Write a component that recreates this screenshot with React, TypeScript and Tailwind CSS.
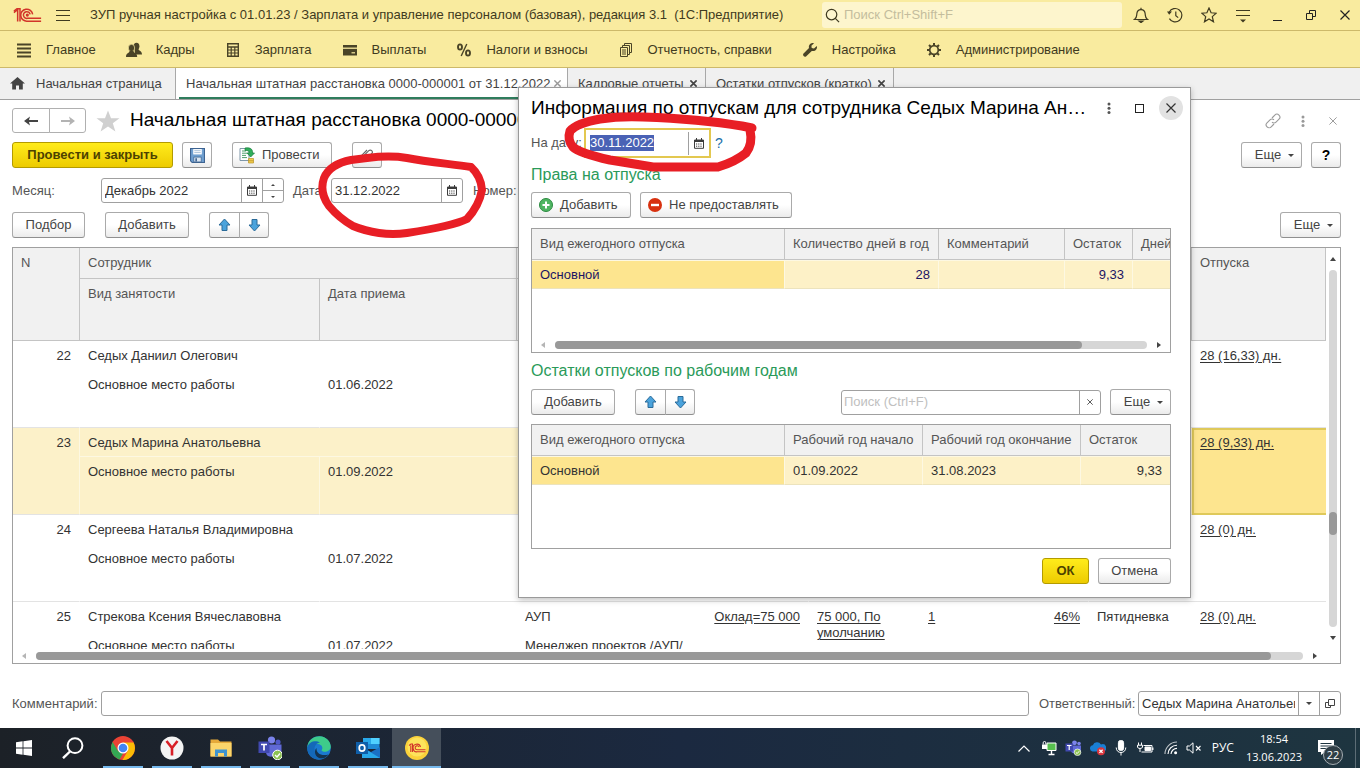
import { useEffect, useRef, type ReactNode } from 'react'

interface Employee {
  n: number
  name: string
  date: string
  vacation: string
  selected?: boolean
  unit?: string
  position?: string
  salary?: string
  tariff?: string
  rate?: string
  percent?: string
  schedule?: string
}

const EMPLOYEES: Employee[] = [
  { n: 22, name: 'Седых Даниил Олегович', date: '01.06.2022', vacation: '28 (16,33) дн.' },
  { n: 23, name: 'Седых Марина Анатольевна', date: '01.09.2022', vacation: '28 (9,33) дн.', selected: true },
  { n: 24, name: 'Сергеева Наталья Владимировна', date: '01.07.2022', vacation: '28 (0) дн.' },
  {
    n: 25,
    name: 'Стрекова Ксения Вячеславовна',
    date: '01.07.2022',
    vacation: '28 (0) дн.',
    unit: 'АУП',
    position: 'Менеджер проектов /АУП/',
    salary: 'Оклад=75 000',
    tariff: '75 000, По умолчанию',
    rate: '1',
    percent: '46%',
    schedule: 'Пятидневка',
  },
]

const BTN_BASE = 'flex h-[26px] shrink-0 items-center whitespace-nowrap rounded-[3px] border'
const BTN_GREY = `${BTN_BASE} border-[#aaaaaa] border-b-[#8f8f8f] bg-linear-to-b from-white from-50% to-[#ebebeb] text-[#444444]`
const BTN = `${BTN_GREY} justify-center`
const BTN_YELLOW = `${BTN_BASE} justify-center border-[#b39b00] bg-linear-to-b from-[#ffec1a] to-[#edcb00] font-bold text-[#4d4200]`
const FIELD = 'flex h-[25px] items-stretch rounded-[3px] border border-[#a0a0a0] bg-white'

/* ---------- иконки ---------- */

function OneCLogo({ className, color = '#d2342a' }: { className?: string; color?: string }) {
  return (
    <svg viewBox="0 0 30 16" className={className} fill="none" stroke={color} strokeWidth="1.6">
      <path d="M0.5 5 L4.5 1.5 V14.5" />
      <path d="M0.5 3.4 L3.8 0.8 H7 V14.5" />
      <path d="M20.5 6.8 A6.4 6.4 0 1 0 15 14 H29.5" />
      <path d="M17.8 6.8 A3.6 3.6 0 1 0 15 11 H29.5" />
      <circle cx="14.8" cy="7.5" r="0.9" />
    </svg>
  )
}

function CalendarIcon() {
  return (
    <svg viewBox="0 0 10 11" className="h-[11px] w-[10px]" fill="none" stroke="#3c3c3c">
      <path d="M0.5 2 H9.5 V10.3 H0.5 Z" />
      <path d="M0.5 3 H9.5" strokeWidth="2" />
      <path d="M2.5 0 V2 M7.5 0 V2" />
      <path d="M2 6 H8.5 M2 8.2 H8.5" strokeDasharray="1.2 1" />
    </svg>
  )
}

function ArrowUp() {
  return (
    <svg viewBox="0 0 13 14" className="h-[14px] w-[13px]">
      <path d="M6.5 1 L12 7 H9 V12.5 H4 V7 H1 Z" fill="#4ba3dc" stroke="#2b6b99" strokeLinejoin="round" />
    </svg>
  )
}

function ArrowDown() {
  return (
    <svg viewBox="0 0 13 14" className="h-[14px] w-[13px]">
      <path d="M6.5 13 L12 7 H9 V1.5 H4 V7 H1 Z" fill="#4ba3dc" stroke="#2b6b99" strokeLinejoin="round" />
    </svg>
  )
}

function Caret({ className = 'h-[3px] w-[6px]' }: { className?: string }) {
  return (
    <svg viewBox="0 0 6 4" preserveAspectRatio="none" className={className}>
      <path d="M0 0 H6 L3 4 Z" fill="#444444" />
    </svg>
  )
}

function Cross({ className, color, width = 1.2 }: { className: string; color: string; width?: number }) {
  return (
    <svg viewBox="0 0 10 10" className={className} stroke={color} strokeWidth={width}>
      <path d="M0.5 0.5 L9.5 9.5 M9.5 0.5 L0.5 9.5" />
    </svg>
  )
}

function Dots({ color }: { color: string }) {
  return (
    <svg viewBox="0 0 4 14" className="h-[14px] w-[4px]" fill={color}>
      <circle cx="2" cy="3" r="1.5" />
      <circle cx="2" cy="7.2" r="1.5" />
      <circle cx="2" cy="11.4" r="1.5" />
    </svg>
  )
}

function Magnifier({ className, color, width }: { className: string; color: string; width: number }) {
  return (
    <svg viewBox="0 0 16 16" className={className} fill="none" stroke={color} strokeWidth={width}>
      <circle cx="7" cy="7" r="5.6" />
      <path d="M11 11 L15 15" />
    </svg>
  )
}

const MENU: { label: string; icon: ReactNode }[] = [
  {
    label: 'Главное',
    icon: <path d="M1 2.5 H15 M1 6.5 H15 M1 10.5 H15 M1 14.5 H15" stroke="#4a4427" strokeWidth="1.8" />,
  },
  {
    label: 'Кадры',
    icon: (
      <g fill="#4a4427">
        <ellipse cx="10.5" cy="4.2" rx="2.9" ry="3.5" />
        <path d="M8.5 7 H12.5 C12.5 9 16 8.6 16 12.5 H9 Z" />
        <ellipse cx="5.5" cy="6" rx="3.2" ry="3.7" stroke="#f9eb9f" strokeWidth="0.7" />
        <path d="M0 15 C0 10.8 3.5 11.5 3.7 8.8 H7.4 C7.5 11.5 11.2 10.8 11.2 15 Z" />
      </g>
    ),
  },
  {
    label: 'Зарплата',
    icon: (
      <g fill="none" stroke="#4a4427" strokeWidth="1.4">
        <path d="M2.7 1.7 H13.3 V14.3 H2.7 Z M2.7 5 H13.3" />
        <path d="M2.7 8 H13.3 M2.7 11 H13.3 M6.2 5 V14 M9.8 5 V14" strokeWidth="1.2" />
      </g>
    ),
  },
  {
    label: 'Выплаты',
    icon: (
      <g>
        <path d="M1 3 H15 V13.5 H1 Z" fill="#4a4427" />
        <path d="M1 6.2 H15" stroke="#f9eb9f" strokeWidth="1.3" />
        <path d="M9.5 10.8 H13" stroke="#f9eb9f" strokeWidth="1.2" />
      </g>
    ),
  },
  {
    label: 'Налоги и взносы',
    icon: (
      <g fill="none" stroke="#4a4427" strokeWidth="1.9">
        <ellipse cx="4" cy="5" rx="2" ry="2.6" />
        <ellipse cx="12" cy="11" rx="2" ry="2.6" />
        <path d="M10.8 2 L5.2 14" strokeWidth="1.4" />
      </g>
    ),
  },
  {
    label: 'Отчетность, справки',
    icon: (
      <g fill="none" stroke="#4a4427">
        <path d="M2.5 5.5 H9.5 V14.5 H2.5 Z M4.5 5.5 V3.5 H11.5 V12.5 H9.5 M6.5 3.5 V1.5 H13.5 V10.5 H11.5" />
        <path d="M4 8 H8 M4 10 H8 M4 12 H8" />
      </g>
    ),
  },
  {
    label: 'Настройка',
    icon: (
      <path
        d="M14.8 4 L12 6.4 L9.7 5.9 L9.4 3.7 L12 1.2 C9 0.4 6.2 2.8 7 6 L1.3 11.8 C0.3 13.2 2.4 15.6 4 14.6 L9.8 8.9 C13 9.8 15.8 7 14.8 4 Z"
        fill="#4a4427"
      />
    ),
  },
  {
    label: 'Администрирование',
    icon: (
      <g fill="none" stroke="#4a4427">
        <circle cx="8" cy="8" r="4.3" strokeWidth="1.7" />
        <path
          d="M8 1 V3.5 M8 12.5 V15 M1 8 H3.5 M12.5 8 H15 M3 3 L4.8 4.8 M11.2 11.2 L13 13 M13 3 L11.2 4.8 M4.8 11.2 L3 13"
          strokeWidth="2"
        />
      </g>
    ),
  },
]

/* ---------- шапка окна ---------- */

function TitleBar() {
  const btn = 'flex h-full w-[34px] items-center justify-center'
  return (
    <header className="flex h-[31px] shrink-0 items-center border-b border-[#cdb96a] bg-[#f9eb9f] text-[#3f3a20]">
      <OneCLogo className="ml-[13px] h-[15px] w-[29px]" />
      <button aria-label="Меню" className="ml-[14px] flex h-[11px] w-[14px] flex-col justify-between">
        <span className="h-px w-full bg-[#3f3a20]" />
        <span className="h-px w-full bg-[#3f3a20]" />
        <span className="h-px w-full bg-[#3f3a20]" />
      </button>
      <h1 className="ml-5 min-w-0 flex-1 truncate whitespace-pre">
        ЗУП ручная настройка с 01.01.23 / Зарплата и управление персоналом (базовая), редакция 3.1  (1С:Предприятие)
      </h1>
      <label className="flex h-[26px] w-[300px] items-center gap-1 rounded-[3px] bg-[#fdf5cd] pl-[3px]">
        <Magnifier className="h-[15px] w-[15px]" color="#3f3a20" width={1.3} />
        <input
          aria-label="Поиск"
          placeholder="Поиск Ctrl+Shift+F"
          className="min-w-0 flex-1 bg-transparent outline-none placeholder:text-[#c4bd9d]"
        />
      </label>
      <div className="-mr-[2px] ml-[2px] flex h-full">
        <button aria-label="Уведомления" className={btn}>
          <svg viewBox="0 0 16 16" className="h-4 w-4" fill="none" stroke="#3f3a20" strokeWidth="1.2">
            <path d="M1.5 12.5 C3.8 11 3.6 9.5 3.8 7 C4 4.3 5.5 2.6 8 2.6 C10.5 2.6 12 4.3 12.2 7 C12.4 9.5 12.2 11 14.5 12.5 Z" />
            <path d="M8 0.8 V2.6" />
            <path d="M6 14 H10 L8 15.6 Z" fill="#3f3a20" />
          </svg>
        </button>
        <button aria-label="История" className={btn}>
          <svg viewBox="0 0 16 16" className="h-4 w-4" fill="none" stroke="#3f3a20" strokeWidth="1.2">
            <path d="M2.2 5.2 A6.7 6.7 0 1 1 2.4 11.6" />
            <path d="M8.8 4.5 V8.6 L11.2 10.6" />
            <path d="M0 4.5 L5 4.5 L2.2 7.8 Z" fill="#3f3a20" stroke="none" />
          </svg>
        </button>
        <button aria-label="Избранное" className={btn}>
          <svg viewBox="0 0 16 16" className="h-4 w-4" fill="none" stroke="#3f3a20" strokeWidth="1.2">
            <path d="M8 1 L10.1 5.8 L15.2 6.2 L11.3 9.6 L12.5 14.8 L8 12 L3.5 14.8 L4.7 9.6 L0.8 6.2 L5.9 5.8 Z" />
          </svg>
        </button>
        <button aria-label="Настройки" className={btn}>
          <svg viewBox="0 0 16 16" className="h-4 w-4" stroke="#3f3a20" strokeWidth="1.2">
            <path d="M1 3.5 H15 M1 8.5 H15" />
            <path d="M5 12.5 H11 L8 15.5 Z" fill="#3f3a20" stroke="none" />
          </svg>
        </button>
        <button aria-label="Свернуть" className={btn}>
          <span className="mt-[10px] h-px w-[9px] bg-[#222222]" />
        </button>
        <button aria-label="Развернуть" className={btn}>
          <svg viewBox="0 0 10 10" className="h-[10px] w-[10px]" fill="none" stroke="#222222">
            <path d="M0.5 3.5 H6.5 V9.5 H0.5 Z M3.5 3.5 V0.5 H9.5 V6.5 H6.5" />
          </svg>
        </button>
        <button aria-label="Закрыть" className={btn}>
          <Cross className="h-[10px] w-[10px]" color="#222222" />
        </button>
      </div>
    </header>
  )
}

function MenuBar() {
  return (
    <nav className="flex h-[37px] shrink-0 items-center gap-[30px] border-b border-[#cdb96a] bg-[#f9eb9f] pt-px pl-4 text-[#3f3a20]">
      {MENU.map(({ label, icon }) => (
        <a key={label} href="#" className="flex items-center gap-[14px] whitespace-nowrap">
          <svg viewBox="0 0 16 16" className="h-4 w-4">
            {icon}
          </svg>
          {label}
        </a>
      ))}
    </nav>
  )
}

function Tabs() {
  const tab = 'flex items-center whitespace-nowrap border-r border-[#a8a8a8] pl-[10px]'
  return (
    <div className="flex h-8 shrink-0 items-stretch border-b border-[#a0a0a0] bg-[#f0f0f0] text-[#444444]">
      <button className="flex w-[176px] items-center gap-[11px] border-r border-[#a8a8a8] pl-[10px]">
        <svg viewBox="0 0 15 13" className="h-[13px] w-[15px]" fill="#444444">
          <path d="M7.5 0 L15 6.5 H12.8 V12.5 H9 V8.5 H6 V12.5 H2.2 V6.5 H0 Z" />
        </svg>
        Начальная страница
      </button>
      <div className="flex w-[392px] items-stretch border-r border-[#a8a8a8] bg-white px-[3px]">
        <button className="flex flex-1 items-center justify-between whitespace-nowrap border-b-2 border-[#2f7d5d] pt-[2px] pr-[3px] pl-[7px]">
          Начальная штатная расстановка 0000-000001 от 31.12.2022
          <Cross className="h-[7px] w-[7px]" color="#999999" width={2} />
        </button>
      </div>
      <button className={`${tab} w-[138px] justify-between pr-2`}>
        Кадровые отчеты
        <Cross className="h-[7px] w-[7px]" color="#444444" width={2.4} />
      </button>
      <button className={`${tab} w-[188px] justify-between pr-2`}>
        Остатки отпусков (кратко)
        <Cross className="h-[7px] w-[7px]" color="#444444" width={2.4} />
      </button>
    </div>
  )
}

/* ---------- общие элементы формы ---------- */

function MoreButton() {
  return (
    <button className={`${BTN} w-[61px] gap-[7px] pl-[6px]`}>
      Еще
      <Caret />
    </button>
  )
}

function MoveButtons() {
  return (
    <div className="flex">
      <button aria-label="Вверх" className={`${BTN} w-[31px] rounded-r-none`}>
        <ArrowUp />
      </button>
      <button aria-label="Вниз" className={`${BTN} -ml-px w-[30px] rounded-l-none`}>
        <ArrowDown />
      </button>
    </div>
  )
}

function HScroll({ thumb }: { thumb: string }) {
  return (
    <div className="flex h-[14px] shrink-0 items-center gap-[10px] px-[9px]">
      <svg viewBox="0 0 4 6" className="h-[6px] w-[4px]">
        <path d="M4 0 V6 L0 3 Z" fill="#b5b5b5" />
      </svg>
      <div className="h-2 flex-1 rounded-full bg-[#d6d6d6]">
        <div className="h-2 rounded-full bg-[#999999]" style={{ width: thumb }} />
      </div>
      <svg viewBox="0 0 4 6" className="h-[6px] w-[4px]">
        <path d="M0 0 V6 L4 3 Z" fill="#444444" />
      </svg>
    </div>
  )
}

/* ---------- форма документа ---------- */

function FormHeader() {
  return (
    <>
      <div className="flex h-[25px] items-center">
        <div className="flex">
          <button aria-label="Назад" className="flex h-[25px] w-[38px] items-center justify-center rounded-l-[3px] border border-[#b0b0b0] bg-white">
            <svg viewBox="0 0 14 10" className="h-[10px] w-[14px]" fill="#444444">
              <path d="M0 5 L6 0.5 L5 4 H14 V6 H5 L6 9.5 Z" />
            </svg>
          </button>
          <button aria-label="Вперед" className="-ml-px flex h-[25px] w-[37px] items-center justify-center rounded-r-[3px] border border-[#b0b0b0] bg-white">
            <svg viewBox="0 0 14 10" className="h-[10px] w-[14px]" fill="#b3b3b3">
              <path d="M14 5 L8 0.5 L9 4 H0 V6 H9 L8 9.5 Z" />
            </svg>
          </button>
        </div>
        <button aria-label="В избранное" className="ml-[10px]">
          <svg viewBox="0 0 24 22" className="h-[22px] w-6" fill="#d0d0d0">
            <path d="M12 0.5 L15 8.3 H23.5 L16.8 13.2 L19.4 21.5 L12 16.5 L4.6 21.5 L7.2 13.2 L0.5 8.3 H9 Z" />
          </svg>
        </button>
        <h2 className="ml-[10px] min-w-0 flex-1 truncate text-[19px] text-black">
          Начальная штатная расстановка 0000-000001
        </h2>
        <button aria-label="Ссылка" className="flex w-[30px] justify-center">
          <svg viewBox="0 0 16 16" className="h-4 w-4" fill="none" stroke="#999999" strokeWidth="1.1">
            <path d="M7 5 L9.8 2.1 A2.8 2.8 0 0 1 14 6.2 L11 9.2 A2.8 2.8 0 0 1 7 9.2" />
            <path d="M9 11 L6.2 13.9 A2.8 2.8 0 0 1 2 9.8 L5 6.8 A2.8 2.8 0 0 1 9 6.8" />
          </svg>
        </button>
        <button aria-label="Еще действия" className="flex w-[30px] justify-center">
          <Dots color="#999999" />
        </button>
        <button aria-label="Закрыть форму" className="-mr-[7px] flex w-[30px] justify-center">
          <Cross className="h-[8px] w-[8px]" color="#999999" />
        </button>
      </div>

      <div className="mt-[9px] flex items-center">
        <button className={`${BTN_YELLOW} w-[161px]`}>Провести и закрыть</button>
        <button aria-label="Записать" className={`${BTN} ml-[9px] w-[30px]`}>
          <svg viewBox="0 0 14 14" className="h-[15px] w-[15px]">
            <path d="M0.5 0.5 H13.5 V13.5 H2 L0.5 12 Z" fill="#6f9fd0" stroke="#3d6391" />
            <path d="M3 1 H11 V6 H3 Z" fill="#ffffff" />
            <path d="M4 2.5 H10 M4 4.3 H10" stroke="#9db8d4" strokeWidth="0.8" />
            <path d="M3.5 8.5 H10.5 V13 H3.5 Z" fill="#dbe6f1" stroke="#3d6391" strokeWidth="0.7" />
            <path d="M5 9.5 H6.5 V12.5 H5 Z" fill="#3d6391" />
          </svg>
        </button>
        <button className={`${BTN_GREY} ml-5 w-[100px] gap-[7px] pl-[6px]`}>
          <svg viewBox="0 0 16 17" className="h-[17px] w-4">
            <path d="M1 1.5 H10 V13.5 H1 Z" fill="#ffffff" stroke="#7f97a8" />
            <path d="M3 4 H7 M3 6.2 H8 M3 8.4 H7 M3 10.6 H8" stroke="#4ea06a" />
            <path d="M6 1 C11 0.2 14 2 13.5 6 H15.5 L11.7 10 L8 6 H10.2 C10.4 4 9 3.2 6 3.5 Z" fill="#2fae5a" stroke="#1b7c3c" strokeWidth="0.7" />
            <path d="M9.5 11.5 H14.5 V16 H9.5 Z" fill="#f2cc4b" stroke="#b8922a" strokeWidth="0.7" />
            <path d="M9.5 13.7 H14.5" stroke="#b8922a" strokeWidth="0.7" />
          </svg>
          Провести
        </button>
        <button aria-label="Файлы" className={`${BTN} ml-5 w-[30px]`}>
          <svg viewBox="0 0 14 14" className="h-[14px] w-[14px]" fill="none" stroke="#666666" strokeWidth="1.1">
            <path d="M3.5 8 L8.8 2.7 A2 2 0 0 1 11.7 5.6 L5.8 11.5 A2.9 2.9 0 0 1 1.7 7.4 L7 2" />
          </svg>
        </button>
        <div className="ml-auto flex gap-[9px]">
          <MoreButton />
          <button className={`${BTN} w-[30px] text-[14px] font-bold text-black`}>?</button>
        </div>
      </div>

      <div className="mt-[10px] flex items-center text-[#555555]">
        <label htmlFor="month" className="w-[89px]">
          Месяц:
        </label>
        <div className={`${FIELD} w-[183px]`}>
          <input id="month" defaultValue="Декабрь 2022" className="min-w-0 flex-1 pl-[3px] text-[#333333] outline-none" />
          <button aria-label="Выбрать месяц" className="flex w-[21px] items-center justify-center border-l border-[#a0a0a0]">
            <CalendarIcon />
          </button>
          <div className="flex w-[21px] flex-col border-l border-[#a0a0a0]">
            <button aria-label="Больше" className="flex flex-1 items-center justify-center border-b border-[#a0a0a0]">
              <svg viewBox="0 0 4 2" className="h-[2px] w-[4px]">
                <path d="M0 2 H4 L2 0 Z" fill="#444444" />
              </svg>
            </button>
            <button aria-label="Меньше" className="flex flex-1 items-center justify-center">
              <Caret className="h-[2px] w-[4px]" />
            </button>
          </div>
        </div>
        <label htmlFor="doc-date" className="ml-[9px] w-[38px]">
          Дата:
        </label>
        <div className={`${FIELD} w-[132px]`}>
          <input id="doc-date" defaultValue="31.12.2022" className="min-w-0 flex-1 pl-[3px] text-[#333333] outline-none" />
          <button aria-label="Выбрать дату" className="flex w-[21px] items-center justify-center border-l border-[#a0a0a0]">
            <CalendarIcon />
          </button>
        </div>
        <label htmlFor="doc-number" className="ml-[10px] w-[50px]">
          Номер:
        </label>
        <input id="doc-number" defaultValue="0000-000001" className="h-[25px] w-[120px] rounded-[3px] border border-[#a0a0a0] pl-[3px]" />
      </div>

      <div className="mt-[9px] flex items-center">
        <button className={`${BTN} w-[73px]`}>Подбор</button>
        <button className={`${BTN} mx-5 w-[84px]`}>Добавить</button>
        <MoveButtons />
        <div className="ml-auto">
          <MoreButton />
        </div>
      </div>
    </>
  )
}

function EmployeeRows({ e }: { e: Employee }) {
  const bg = e.selected ? 'bg-[#fcf1c9]' : ''
  const line = e.selected ? 'border-r border-r-[#fdf8e2]' : 'border-r border-r-transparent'
  const cell = `border-b border-b-[#e3e3e3] px-2 pt-[7px] align-top ${bg}`
  return (
    <>
      <tr className="h-[29px]">
        <td rowSpan={2} className={`${cell} ${line} text-right`}>{e.n}</td>
        <td colSpan={2} className={`px-2 pt-[7px] align-top ${bg} ${e.selected ? 'border-b border-[#fdf8e2]' : ''}`}>{e.name}</td>
        <td className={`px-2 pt-[7px] align-top ${bg}`}>{e.unit}</td>
        <td rowSpan={2} className={`${cell} ${line} text-right underline underline-offset-2`}>{e.salary}</td>
        <td rowSpan={2} className={`${cell} leading-4 underline underline-offset-2`}>{e.tariff}</td>
        <td rowSpan={2} className={`${cell} underline underline-offset-2`}>{e.rate}</td>
        <td rowSpan={2} className={`${cell} ${line} text-right underline underline-offset-2`}>{e.percent}</td>
        <td rowSpan={2} className={cell}>{e.schedule}</td>
        <td
          rowSpan={2}
          className={`align-top underline underline-offset-2 ${
            e.selected
              ? 'border-2 border-r-0 border-[#dfc95a] bg-[#fde58f] pt-[5px] pr-2 pl-[6px]'
              : 'border-b border-[#e3e3e3] px-2 pt-[7px]'
          }`}
        >
          {e.vacation}
        </td>
      </tr>
      <tr className="h-[58px]">
        <td className={`${cell} ${line}`}>Основное место работы</td>
        <td className={cell}>{e.date}</td>
        <td className={cell}>{e.position}</td>
      </tr>
    </>
  )
}

function EmployeeTable() {
  const th = 'border-r border-b border-[#c4c4c4] bg-[#f1f1f1] px-2 pt-[7px] text-left align-top font-normal'
  return (
    <div className="mt-[9px] flex min-h-0 flex-1 flex-col border border-[#a0a0a0]">
      <div className="flex min-h-0 flex-1">
        <div className="min-w-0 flex-1 overflow-hidden">
          <table className="w-full table-fixed border-separate border-spacing-0 leading-4 text-[#333333]">
            <colgroup>
              <col className="w-[67px]" />
              <col className="w-[240px]" />
              <col className="w-[197px]" />
              <col />
              <col className="w-[103px]" />
              <col className="w-[111px]" />
              <col className="w-[84px]" />
              <col className="w-[85px]" />
              <col className="w-[103px]" />
              <col className="w-[134px]" />
            </colgroup>
            <thead className="text-[#555555]">
              <tr className="h-[31px]">
                <th rowSpan={2} className={th}>N</th>
                <th colSpan={2} className={th}>Сотрудник</th>
                <th className={th}>Подразделение</th>
                <th rowSpan={2} className={th}>Начисления</th>
                <th rowSpan={2} className={th}>Аванс</th>
                <th rowSpan={2} className={th}>Ставка</th>
                <th rowSpan={2} className={th}>Процент</th>
                <th rowSpan={2} className={th}>График</th>
                <th rowSpan={2} className={th}>Отпуска</th>
              </tr>
              <tr className="h-[62px]">
                <th className={th}>Вид занятости</th>
                <th className={th}>Дата приема</th>
                <th className={th}>Должность</th>
              </tr>
            </thead>
            <tbody>
              {EMPLOYEES.map((e) => (
                <EmployeeRows key={e.n} e={e} />
              ))}
            </tbody>
          </table>
        </div>
        <div className="flex w-[14px] shrink-0 flex-col items-center pt-[9px] pb-[9px]">
          <svg viewBox="0 0 6 4" className="h-[4px] w-[6px]">
            <path d="M0 4 H6 L3 0 Z" fill="#444444" />
          </svg>
          <div className="my-[9px] flex w-2 flex-1 flex-col rounded-full bg-[#d6d6d6]">
            <div className="mt-auto mb-[92px] h-[23px] rounded-full bg-[#999999]" />
          </div>
          <Caret className="h-[4px] w-[6px]" />
        </div>
      </div>
      <div className="pr-[14px]">
        <HScroll thumb="97.5%" />
      </div>
    </div>
  )
}

function FormFooter() {
  return (
    <div className="mt-[27px] mb-3 flex items-center text-[#555555]">
      <label htmlFor="comment" className="w-[89px]">
        Комментарий:
      </label>
      <input id="comment" className="h-[25px] min-w-0 flex-1 rounded-[3px] border border-[#a0a0a0] px-1" />
      <label htmlFor="responsible" className="ml-[10px] w-[99px]">
        Ответственный:
      </label>
      <div className={`${FIELD} w-[203px]`}>
        <input
          id="responsible"
          defaultValue="Седых Марина Анатольевна"
          className="mr-[3px] min-w-0 flex-1 pl-[3px] text-[#333333] outline-none"
        />
        <button aria-label="Выбрать" className="flex w-[21px] items-center justify-center border-l border-[#a0a0a0]">
          <Caret />
        </button>
        <button aria-label="Открыть" className="flex w-[21px] items-center justify-center border-l border-[#a0a0a0]">
          <svg viewBox="0 0 10 10" className="h-[10px] w-[10px]" fill="none" stroke="#444444">
            <path d="M3.5 0.5 H9.5 V6.5 H3.5 Z M3.5 3.5 H0.5 V8.5 H5.5 V6.5" />
          </svg>
        </button>
      </div>
    </div>
  )
}

/* ---------- окно остатков отпусков ---------- */

function VacationDialog() {
  const dateRef = useRef<HTMLInputElement>(null)

  // дата открывается выделенной, чтобы сразу ввести новую
  useEffect(() => {
    dateRef.current?.focus()
    dateRef.current?.select()
  }, [])

  const th = 'border-r border-b border-[#c4c4c4] bg-[#f1f1f1] px-2 text-left font-normal text-[#555555] last:border-r-0'
  const td = 'border-r border-t border-b border-[#fdf8e2] border-b-[#ece3bd] bg-[#fdf1c7] px-2 last:border-r-0'
  const current = 'border-r border-t border-b border-[#fdf8e2] border-b-[#ece3bd] bg-[#fde58f] px-2'

  return (
    <section
      role="dialog"
      aria-labelledby="vacation-title"
      className="absolute top-[87px] left-[518px] z-10 w-[673px] border border-[#9a9a9a] bg-white pr-[19px] pb-[13px] pl-3 shadow-[0_2px_6px_rgba(0,0,0,0.25)]"
    >
      <div className="-mr-3 flex h-10 items-center">
        <h2 id="vacation-title" className="min-w-0 flex-1 truncate text-[19px] text-black">
          Информация по отпускам для сотрудника Седых Марина Ан…
        </h2>
        <button aria-label="Еще действия" className="flex w-[31px] justify-center">
          <Dots color="#555555" />
        </button>
        <button aria-label="Развернуть окно" className="flex w-[31px] justify-center">
          <span className="h-[9px] w-[9px] border border-[#222222]" />
        </button>
        <button aria-label="Закрыть окно" className="ml-1 flex h-6 w-6 items-center justify-center rounded-full bg-[#e2e2e2]">
          <Cross className="h-[10px] w-[10px]" color="#333333" />
        </button>
      </div>

      <div className="flex h-[30px] items-center text-[#555555]">
        <label htmlFor="on-date" className="w-[53px]">
          На дату:
        </label>
        <div className="flex h-[30px] w-[127px] items-center border-2 border-[#e3c850]">
          <div className="min-w-0 flex-1 pl-1">
            <input
              id="on-date"
              ref={dateRef}
              defaultValue="30.11.2022"
              className="block h-4 w-full text-[#333333] outline-none selection:bg-[#4a62b5] selection:text-white"
            />
          </div>
          <button aria-label="Выбрать дату" className="flex h-[23px] w-[21px] items-center justify-center border-l border-[#a0a0a0]">
            <CalendarIcon />
          </button>
        </div>
        <button className="ml-1 text-[14px] text-[#1c6fa8]">?</button>
      </div>

      <h3 className="flex h-[34px] items-center text-[16px] text-[#2a9a59]">Права на отпуска</h3>
      <div className="flex gap-[9px]">
        <button className={`${BTN_GREY} w-[100px] gap-[7px] pl-[7px]`}>
          <svg viewBox="0 0 14 14" className="h-[14px] w-[14px]">
            <circle cx="7" cy="7" r="6.5" fill="#4fb562" stroke="#2c8a41" />
            <path d="M7 3.5 V10.5 M3.5 7 H10.5" stroke="#ffffff" strokeWidth="2" />
          </svg>
          Добавить
        </button>
        <button className={`${BTN_GREY} w-[152px] gap-[7px] pl-[7px]`}>
          <svg viewBox="0 0 14 14" className="h-[14px] w-[14px]">
            <circle cx="7" cy="7" r="7" fill="#d8310f" />
            <path d="M3 7 H11" stroke="#ffffff" strokeWidth="2.4" />
          </svg>
          Не предоставлять
        </button>
      </div>

      <div className="mt-[10px] flex h-[125px] flex-col border border-[#a0a0a0]">
        <div className="flex-1">
          <table className="w-full table-fixed border-separate border-spacing-0 text-[#1b1464]">
            <colgroup>
              <col className="w-[253px]" />
              <col className="w-[154px]" />
              <col className="w-[126px]" />
              <col className="w-[68px]" />
              <col />
            </colgroup>
            <thead>
              <tr className="h-[31px]">
                <th className={th}>Вид ежегодного отпуска</th>
                <th className={`${th} whitespace-nowrap`}>Количество дней в год</th>
                <th className={th}>Комментарий</th>
                <th className={th}>Остаток</th>
                <th className={`${th} overflow-hidden pr-0`}>Дней</th>
              </tr>
            </thead>
            <tbody>
              <tr className="h-[29px]">
                <td className={current}>Основной</td>
                <td className={`${td} text-right`}>28</td>
                <td className={td} />
                <td className={`${td} text-right`}>9,33</td>
                <td className={td} />
              </tr>
            </tbody>
          </table>
        </div>
        <HScroll thumb="89%" />
      </div>

      <h3 className="flex h-9 items-center text-[16px] text-[#2a9a59]">Остатки отпусков по рабочим годам</h3>
      <div className="flex items-center">
        <button className={`${BTN} mr-5 w-[84px]`}>Добавить</button>
        <MoveButtons />
        <div className={`${FIELD} mr-[9px] ml-auto w-[260px]`}>
          <input
            aria-label="Поиск по списку"
            placeholder="Поиск (Ctrl+F)"
            className="min-w-0 flex-1 pl-[2px] outline-none placeholder:text-[#c0c0c0]"
          />
          <button aria-label="Очистить" className="flex w-[21px] items-center justify-center border-l border-[#a0a0a0]">
            <Cross className="h-[6px] w-[6px]" color="#555555" width={1.6} />
          </button>
        </div>
        <MoreButton />
      </div>

      <div className="mt-[9px] h-[125px] border border-[#a0a0a0]">
        <table className="w-full table-fixed border-separate border-spacing-0 text-[#333333]">
          <colgroup>
            <col className="w-[253px]" />
            <col className="w-[138px]" />
            <col className="w-[158px]" />
            <col />
          </colgroup>
          <thead>
            <tr className="h-[31px]">
              <th className={th}>Вид ежегодного отпуска</th>
              <th className={`${th} whitespace-nowrap`}>Рабочий год начало</th>
              <th className={`${th} whitespace-nowrap`}>Рабочий год окончание</th>
              <th className={th}>Остаток</th>
            </tr>
          </thead>
          <tbody>
            <tr className="h-[29px]">
              <td className={current}>Основной</td>
              <td className={td}>01.09.2022</td>
              <td className={td}>31.08.2023</td>
              <td className={`${td} text-right`}>9,33</td>
            </tr>
          </tbody>
        </table>
      </div>

      <div className="mt-[9px] flex justify-end gap-[9px]">
        <button className={`${BTN_YELLOW} w-[47px]`}>ОК</button>
        <button className={`${BTN} w-[73px]`}>Отмена</button>
      </div>
    </section>
  )
}

/* ---------- панель задач ---------- */

const APPS: { name: string; icon: ReactNode; active?: boolean }[] = [
  {
    name: 'Chrome',
    icon: (
      <>
        <circle cx="12" cy="12" r="12" fill="#ea4335" />
        <path d="M1.6 6 L7 15 L12 17.5 L8.5 23.5 A12 12 0 0 1 1.6 6 Z" fill="#34a853" />
        <path d="M12 6.5 H22.6 A12 12 0 0 1 11.5 24 L17 14.5 Z" fill="#fbbc05" />
        <circle cx="12" cy="12" r="5.5" fill="#ffffff" />
        <circle cx="12" cy="12" r="4.3" fill="#4285f4" />
      </>
    ),
  },
  {
    name: 'Яндекс Браузер',
    icon: (
      <>
        <circle cx="12" cy="12" r="11.5" fill="#f4f4f4" />
        <path d="M6.5 5 L12 12 V19.5 M17.5 5 L12 12" fill="none" stroke="#d81f26" strokeWidth="2.6" />
      </>
    ),
  },
  {
    name: 'Проводник',
    icon: (
      <>
        <path d="M1.5 3.5 H9 L11 5.5 H22.5 V20.5 H1.5 Z" fill="#e5a93a" />
        <path d="M1.5 7 H22.5 V20.5 H1.5 Z" fill="#fbd56b" />
        <path d="M6 20.5 V13.5 H18 V20.5 H15 V17 H9 V20.5 Z" fill="#3f94cf" />
      </>
    ),
  },
  {
    name: 'Teams',
    icon: (
      <>
        <circle cx="20" cy="6" r="2.6" fill="#5059c9" />
        <circle cx="13.5" cy="4" r="3.6" fill="#7b83eb" />
        <path d="M8 8.5 H23.5 V16 C23.5 20 18 21 17 17 C15 23 8 21 8 16 Z" fill="#6069d6" />
        <path d="M0.5 5.5 H11.5 V17 H0.5 Z" fill="#4149b0" />
        <path d="M3 8.5 H9 M6 8.5 V14.5" stroke="#ffffff" strokeWidth="1.7" />
        <circle cx="19.5" cy="19" r="4.8" fill="#8cc152" stroke="#ffffff" />
        <path d="M17 19 L19 21 L22 17.5" fill="none" stroke="#ffffff" strokeWidth="1.4" />
      </>
    ),
  },
  {
    name: 'Edge',
    icon: (
      <>
        <circle cx="12" cy="12" r="11.8" fill="#1b7ad0" />
        <path d="M0.4 11 C1 3 8 0.2 12.5 0.2 C19.5 0.4 24 6 23.8 11 C23.5 15.5 17 17 14.5 14.5 C16.5 12 15 8.5 11 8 C6.5 7.5 2 9 0.4 11 Z" fill="#3ecb8a" />
        <path d="M0.4 11 C2 5 9 4 13 6.5 C9 7 6.5 11 8 15.5 C9 19.5 13 22 17.5 22 C8 26 -0.5 20 0.4 11 Z" fill="#1468b8" />
        <path d="M9.5 12 C9 17 14 20.5 21.5 18.5 C19 22 15.5 23 12 22 C7.5 20 7 14.5 9.5 12 Z" fill="#14334f" />
      </>
    ),
  },
  {
    name: 'Outlook',
    icon: (
      <>
        <path d="M7 2 H23.5 V13 H7 Z" fill="#1f8ad6" />
        <path d="M7 2 H15 V8 H7 Z" fill="#28a8ea" />
        <path d="M15 2 H23.5 V8 H15 Z" fill="#50d0ff" />
        <path d="M6 11 L15 16 L24 11 V22 H6 Z" fill="#1a6fc4" />
        <path d="M6 11 L24 22 H6 Z" fill="#28a8ea" />
        <path d="M0 6 H12 V18 H0 Z" fill="#0f5ea8" />
        <ellipse cx="6" cy="12" rx="2.8" ry="3.2" fill="none" stroke="#ffffff" strokeWidth="1.7" />
      </>
    ),
  },
  {
    name: '1С:Предприятие',
    active: true,
    icon: (
      <>
        <circle cx="12" cy="12" r="12" fill="#fbd23a" />
        <circle cx="12" cy="11" r="9.5" fill="#fde35c" />
        <g fill="none" stroke="#d2342a" strokeWidth="1.1">
          <path d="M4 9.5 L6 8 H7.5 V16 M5.8 9.5 V16" />
          <path d="M15.5 11 A3.8 3.8 0 1 0 12.3 15.8 H20.5" />
          <path d="M14 11 A2 2 0 1 0 12.3 13.8 H20.5" />
        </g>
      </>
    ),
  },
]

function Taskbar() {
  return (
    <footer className="flex h-10 shrink-0 items-stretch bg-linear-to-r from-[#1c2127] via-[#1b2940] to-[#1e3540] text-white">
      <button aria-label="Пуск" className="flex w-12 items-center justify-center">
        <svg viewBox="0 0 16 16" className="h-4 w-4" fill="#ffffff">
          <path d="M0 2.2 L6.6 1.3 V7.6 H0 Z M7.4 1.2 L16 0 V7.6 H7.4 Z M0 8.4 H6.6 V14.7 L0 13.8 Z M7.4 8.4 H16 V16 L7.4 14.8 Z" />
        </svg>
      </button>
      <button aria-label="Поиск в Windows" className="flex w-[50px] items-center justify-center">
        <svg viewBox="0 0 22 22" className="h-[22px] w-[22px]" fill="none" stroke="#ffffff" strokeWidth="2">
          <circle cx="13" cy="8.6" r="7.4" />
          <path d="M8 14.5 L1 21.2" strokeWidth="2.4" />
        </svg>
      </button>
      {APPS.map(({ name, icon, active }) => (
        <button
          key={name}
          aria-label={name}
          className={`flex w-[49px] flex-col items-center justify-end ${active ? 'bg-[#454f5b]' : ''}`}
        >
          <svg viewBox="0 0 24 24" className="mb-[6px] h-6 w-6">
            {icon}
          </svg>
          <span className={`h-[2px] bg-[#76b9ed] ${active ? 'w-full' : 'w-10'}`} />
        </button>
      ))}

      <div className="ml-auto flex items-center font-['Open_Sans','Noto_Sans',sans-serif] text-[11px]">
        <svg viewBox="0 0 12 7" className="h-[7px] w-3" fill="none" stroke="#ffffff" strokeWidth="1.2">
          <path d="M0.5 6.5 L6 1 L11.5 6.5" />
        </svg>
        <svg viewBox="0 0 16 16" className="ml-[11px] h-4 w-4">
          <path d="M6 3 H15 V10.5 H6 Z" fill="#57c04f" stroke="#ffffff" />
          <path d="M10.5 11 V14 M7.5 14.5 H13.5" stroke="#ffffff" strokeWidth="1.4" />
          <path d="M1 4.5 H6 V9 H1 Z" fill="#ffffff" />
          <path d="M2.2 4.5 V2.8 A1.3 1.3 0 0 1 4.8 2.8 V4.5" fill="none" stroke="#ffffff" />
        </svg>
        <svg viewBox="0 0 17 16" className="ml-2 h-4 w-[17px]">
          <circle cx="14" cy="3.6" r="1.8" fill="#7b83eb" />
          <circle cx="9.5" cy="2.8" r="2.4" fill="#7b83eb" />
          <path d="M6 5.5 H16 V11 C15 14 7 15 6 11 Z" fill="#6069d6" />
          <path d="M0.5 3.5 H8 V11.5 H0.5 Z" fill="#4149b0" />
          <path d="M2 5.5 H6.5 M4.2 5.5 V10" stroke="#ffffff" strokeWidth="1.2" />
          <circle cx="12.5" cy="12.3" r="3.3" fill="#8cc152" stroke="#ffffff" strokeWidth="0.7" />
          <path d="M10.9 12.4 L12.2 13.6 L14.2 11.2" fill="none" stroke="#ffffff" />
        </svg>
        <svg viewBox="0 0 17 16" className="ml-[7px] h-4 w-[17px]">
          <path d="M3.5 11.5 A3.2 3.2 0 0 1 3.8 5.2 A4.6 4.6 0 0 1 12 4.5 A3.6 3.6 0 0 1 15 11.5 Z" fill="#1a7fd4" />
          <circle cx="12" cy="11.3" r="4" fill="#d9363e" />
          <path d="M10.4 9.7 L13.6 12.9 M13.6 9.7 L10.4 12.9" stroke="#ffffff" strokeWidth="1.3" />
        </svg>
        <svg viewBox="0 0 12 16" className="ml-[9px] h-4 w-3" fill="none" stroke="#ffffff">
          <rect x="3.4" y="0.5" width="5.2" height="10" rx="2.2" fill="#ffffff" />
          <path d="M1.2 7.5 C1.2 14.2 10.8 14.2 10.8 7.5 M6 12.5 V15.5" />
        </svg>
        <svg viewBox="0 0 17 12" className="ml-[10px] h-3 w-[17px]" fill="none" stroke="#ffffff">
          <path d="M6.5 3.5 H15 V10 H4.5" />
          <path d="M8 5 H13.6 V8.6 H8 Z" fill="#ffffff" />
          <path d="M15.8 5.5 V8" strokeWidth="1.3" />
          <path d="M1.5 0.5 V3 M4.5 0.5 V3 M0.5 3.2 H5.5 V5 C5.5 7 0.5 7 0.5 5 Z M3 6.5 V10" />
        </svg>
        <svg viewBox="0 0 14 14" className="ml-[10px] h-[14px] w-[14px]" fill="none" stroke="#ffffff" strokeWidth="1.1">
          <path d="M1 13 A12 12 0 0 1 13 1" opacity="0.7" />
          <path d="M4 13 A9 9 0 0 1 13 4.2 M7 13 A6 6 0 0 1 13 7.4" />
          <circle cx="11.6" cy="11.8" r="1.5" fill="#ffffff" stroke="none" />
        </svg>
        <svg viewBox="0 0 16 12" className="ml-2 h-3 w-4" fill="none" stroke="#ffffff">
          <path d="M1 4 H3.5 L7 0.8 V11.2 L3.5 8 H1 Z" />
          <path d="M10 4 L14.5 8.5 M14.5 4 L10 8.5" strokeWidth="1.1" />
        </svg>
        <span className="ml-[10px] text-[12px]">РУС</span>
        <div className="ml-3 text-center leading-[18px]">
          <div>18:54</div>
          <div>13.06.2023</div>
        </div>
        <div className="relative ml-4 h-full w-[34px]">
          <svg viewBox="0 0 16 15" className="absolute top-3 left-0 h-[15px] w-4">
            <path d="M0 0 H16 V12 H7 L3 15 V12 H0 Z" fill="#ffffff" />
            <path d="M2.5 3.5 H13.5 M2.5 6 H13.5 M2.5 8.5 H10" stroke="#1e3540" />
          </svg>
          <span className="absolute top-[17px] left-[5px] flex h-5 w-5 items-center justify-center rounded-full border border-[#a5adb2] bg-[#2f3e46]">
            22
          </span>
        </div>
        <span className="ml-[3px] h-full w-[5px] border-l border-[#5d6d76]" />
      </div>
    </footer>
  )
}

/* Обводка маркером поверх обеих дат */
function MarkerRings() {
  return (
    <svg
      viewBox="0 0 450 130"
      className="pointer-events-none absolute top-[110px] left-[315px] z-20 h-[130px] w-[450px]"
      fill="none"
      stroke="#e81e25"
      strokeWidth="8"
      strokeLinejoin="round"
      strokeLinecap="round"
    >
      <path d="M52 48 C68 46 80 46 92 48 C112 52 136 54 156 57 Q166 66 167 80 Q164 96 152 109 Q138 116 92 123 Q78 125 64 123 Q50 121 38 116 Q24 108 14 96 Q4 82 9 68 Q15 54 36 50 Z" />
      <path
        d="M437 18 L427 16 Q385 9 328 7 Q305 6 285 9 Q262 13 255 21 Q252 30 258 37 Q264 43 295 50 L338 57 H403 Q420 52 431 43 Q438 34 435 20"
        strokeWidth="9"
      />
    </svg>
  )
}

export default function App() {
  return (
    <div className="relative flex h-screen flex-col overflow-hidden bg-white font-['Liberation_Sans',Arial,sans-serif] text-[13px]">
      <TitleBar />
      <MenuBar />
      <Tabs />
      <main className="flex min-h-0 flex-1 flex-col pt-2 pr-[19px] pl-3">
        <FormHeader />
        <EmployeeTable />
        <FormFooter />
      </main>
      <Taskbar />
      <VacationDialog />
      <MarkerRings />
    </div>
  )
}
